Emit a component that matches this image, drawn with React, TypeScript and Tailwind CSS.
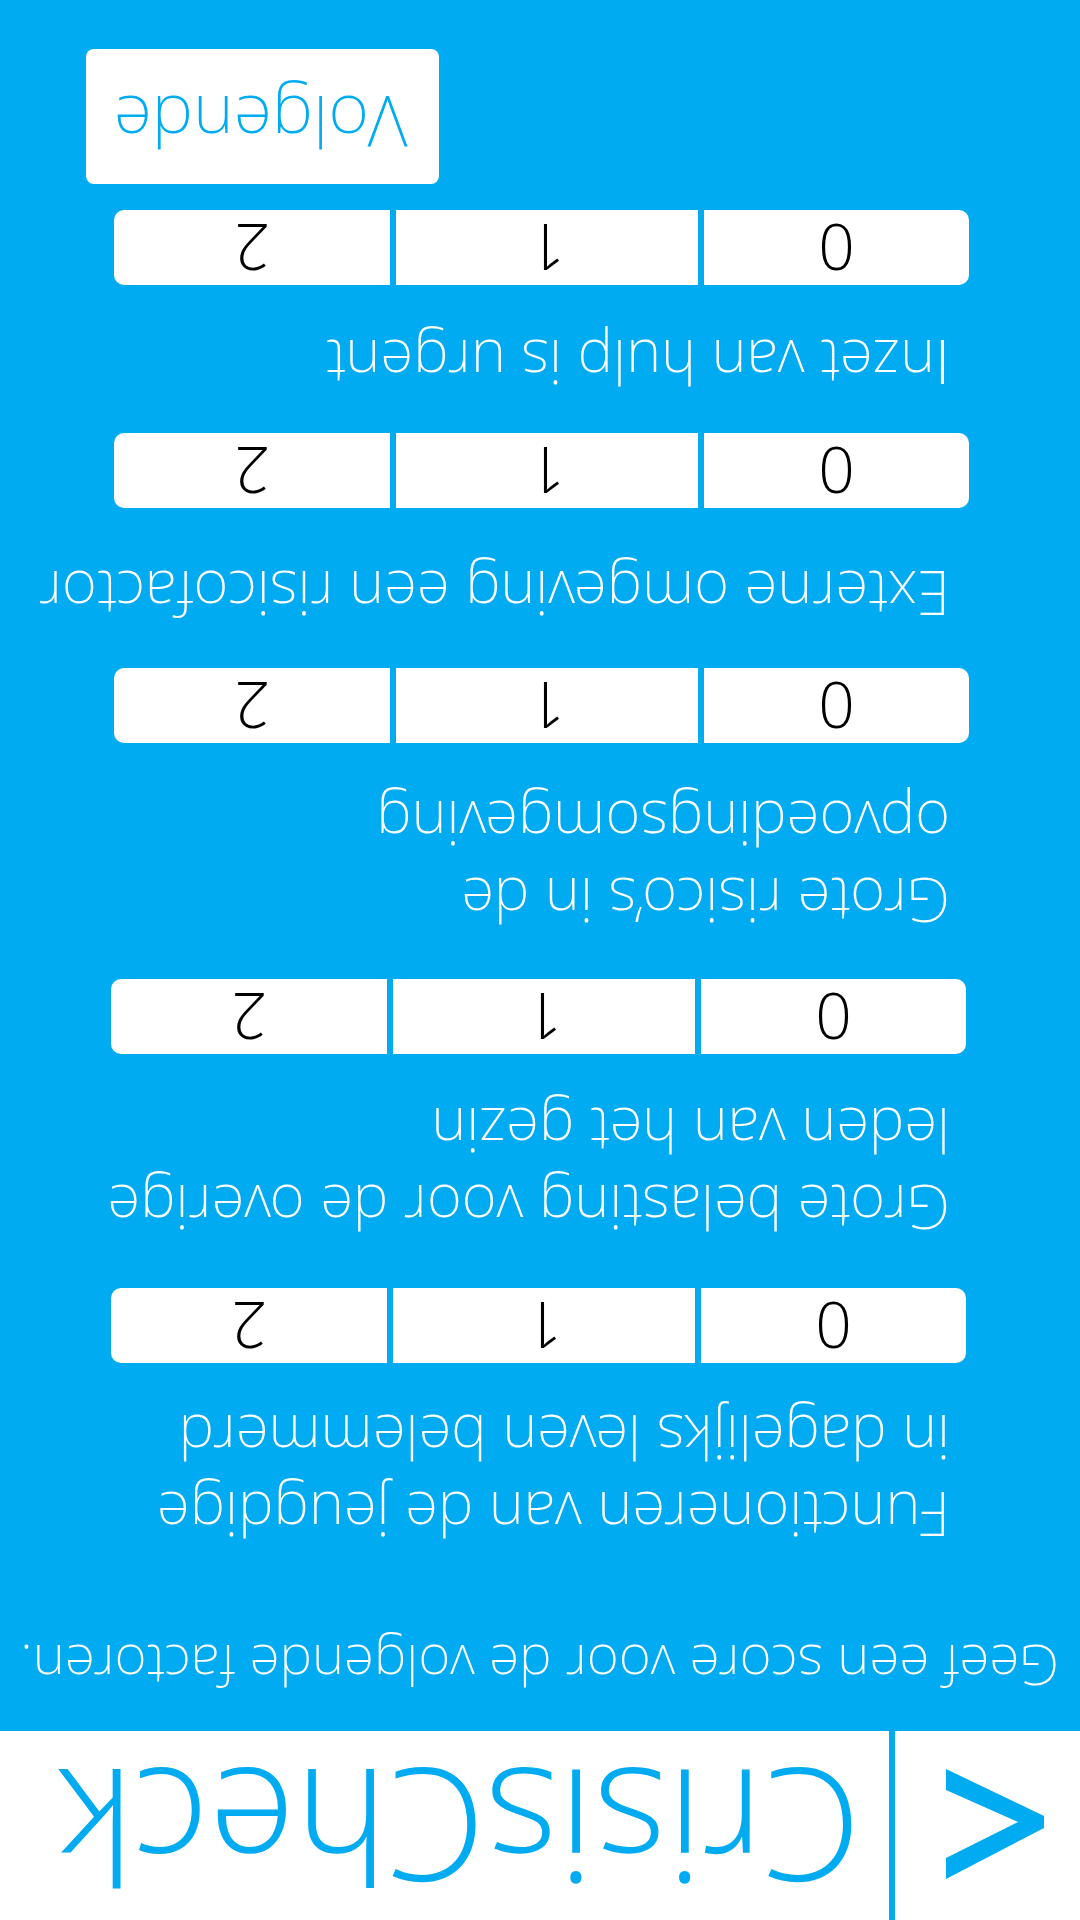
type Factor = {
  id: string;
  lines: string[];
  spacing: string;
  barSpacing: string;
  plainCapital?: boolean;
};

const factors: Factor[] = [
  {
    id: "functioneren",
    lines: ["Functioneren van de jeugdige", "in dagelijks leven belemmerd"],
    spacing: "pt-[77px]",
    barSpacing: "mt-9 ml-[114px] mr-[111px]",
  },
  {
    id: "belasting",
    lines: ["Grote belasting voor de overige", "leden van het gezin"],
    spacing: "pt-[42px]",
    barSpacing: "mt-[38px] ml-[114px] mr-[111px]",
  },
  {
    id: "opvoeding",
    lines: ["Grote risico’s in de", "opvoedingsomgeving"],
    spacing: "pt-10",
    barSpacing: "mt-[42px] ml-[111px] mr-[114px]",
  },
  {
    id: "omgeving",
    lines: ["Externe omgeving een risicofactor"],
    spacing: "pt-9",
    barSpacing: "mt-[47px] ml-[111px] mr-[114px]",
  },
  {
    id: "urgentie",
    lines: ["Inzet van hulp is urgent"],
    spacing: "pt-8",
    barSpacing: "mt-[39px] ml-[111px] mr-[114px]",
    plainCapital: true,
  },
];

const scores = [0, 1, 2];

function Header() {
  return (
    <header className="flex h-[189px] bg-white text-[#00abf2]">
      <button
        type="button"
        aria-label="Terug"
        className="flex w-[191px] shrink-0 items-start border-r-[6px] border-[#00abf2] pt-[41px] pl-9"
      >
        <svg width="99" height="110" viewBox="0 0 99 110" fill="currentColor" className="block">
          <path d="M98 0V21L26 57L98 89V110L0 63V51Z" />
        </svg>
      </button>
      <h1 className="pl-7 font-['Open_Sans',sans-serif] text-[157px] leading-[181px] font-light whitespace-nowrap">
        CrisisCheck
      </h1>
    </header>
  );
}

function FactorField({ factor }: { factor: Factor }) {
  return (
    <fieldset className={factor.spacing}>
      <legend className="contents">
        <span className="block pl-[130px] text-[60px] leading-[77px] whitespace-nowrap">
          {factor.lines.map((line) => (
            <span
              key={line}
              className={
                factor.plainCapital
                  ? "block first-letter:font-['Open_Sans',sans-serif] first-letter:font-light"
                  : "block"
              }
            >
              {line}
            </span>
          ))}
        </span>
      </legend>
      <div className={`grid grid-cols-[265fr_302fr_276fr] gap-1.5 ${factor.barSpacing}`}>
        {scores.map((score) => (
          <label
            key={score}
            className="relative h-[75px] cursor-pointer bg-white text-center font-['Open_Sans',sans-serif] text-[64px] leading-[74px] font-light text-black first:rounded-l-[10px] last:rounded-r-[10px]"
          >
            <input
              type="radio"
              name={factor.id}
              value={score}
              className="absolute inset-0 cursor-pointer appearance-none"
            />
            {score}
          </label>
        ))}
      </div>
    </fieldset>
  );
}

export default function App() {
  return (
    <div className="min-h-screen rotate-180 bg-[#00abf2] font-['Noto_Sans',sans-serif] font-extralight text-white">
      <Header />
      <form onSubmit={(event) => event.preventDefault()}>
        <p className="pt-[29px] pl-[21px] text-[55px] leading-[72px] whitespace-nowrap">
          Geef een score voor de volgende factoren.
        </p>
        {factors.map((factor) => (
          <FactorField key={factor.id} factor={factor} />
        ))}
        <div className="mt-[26px] mr-[86px] flex justify-end pb-[49px]">
          <button
            type="submit"
            className="h-[135px] w-[353px] rounded-lg bg-white pb-[13px] pl-1 text-[70px] leading-[122px] text-[#00abf2]"
          >
            Volgende
          </button>
        </div>
      </form>
    </div>
  );
}
